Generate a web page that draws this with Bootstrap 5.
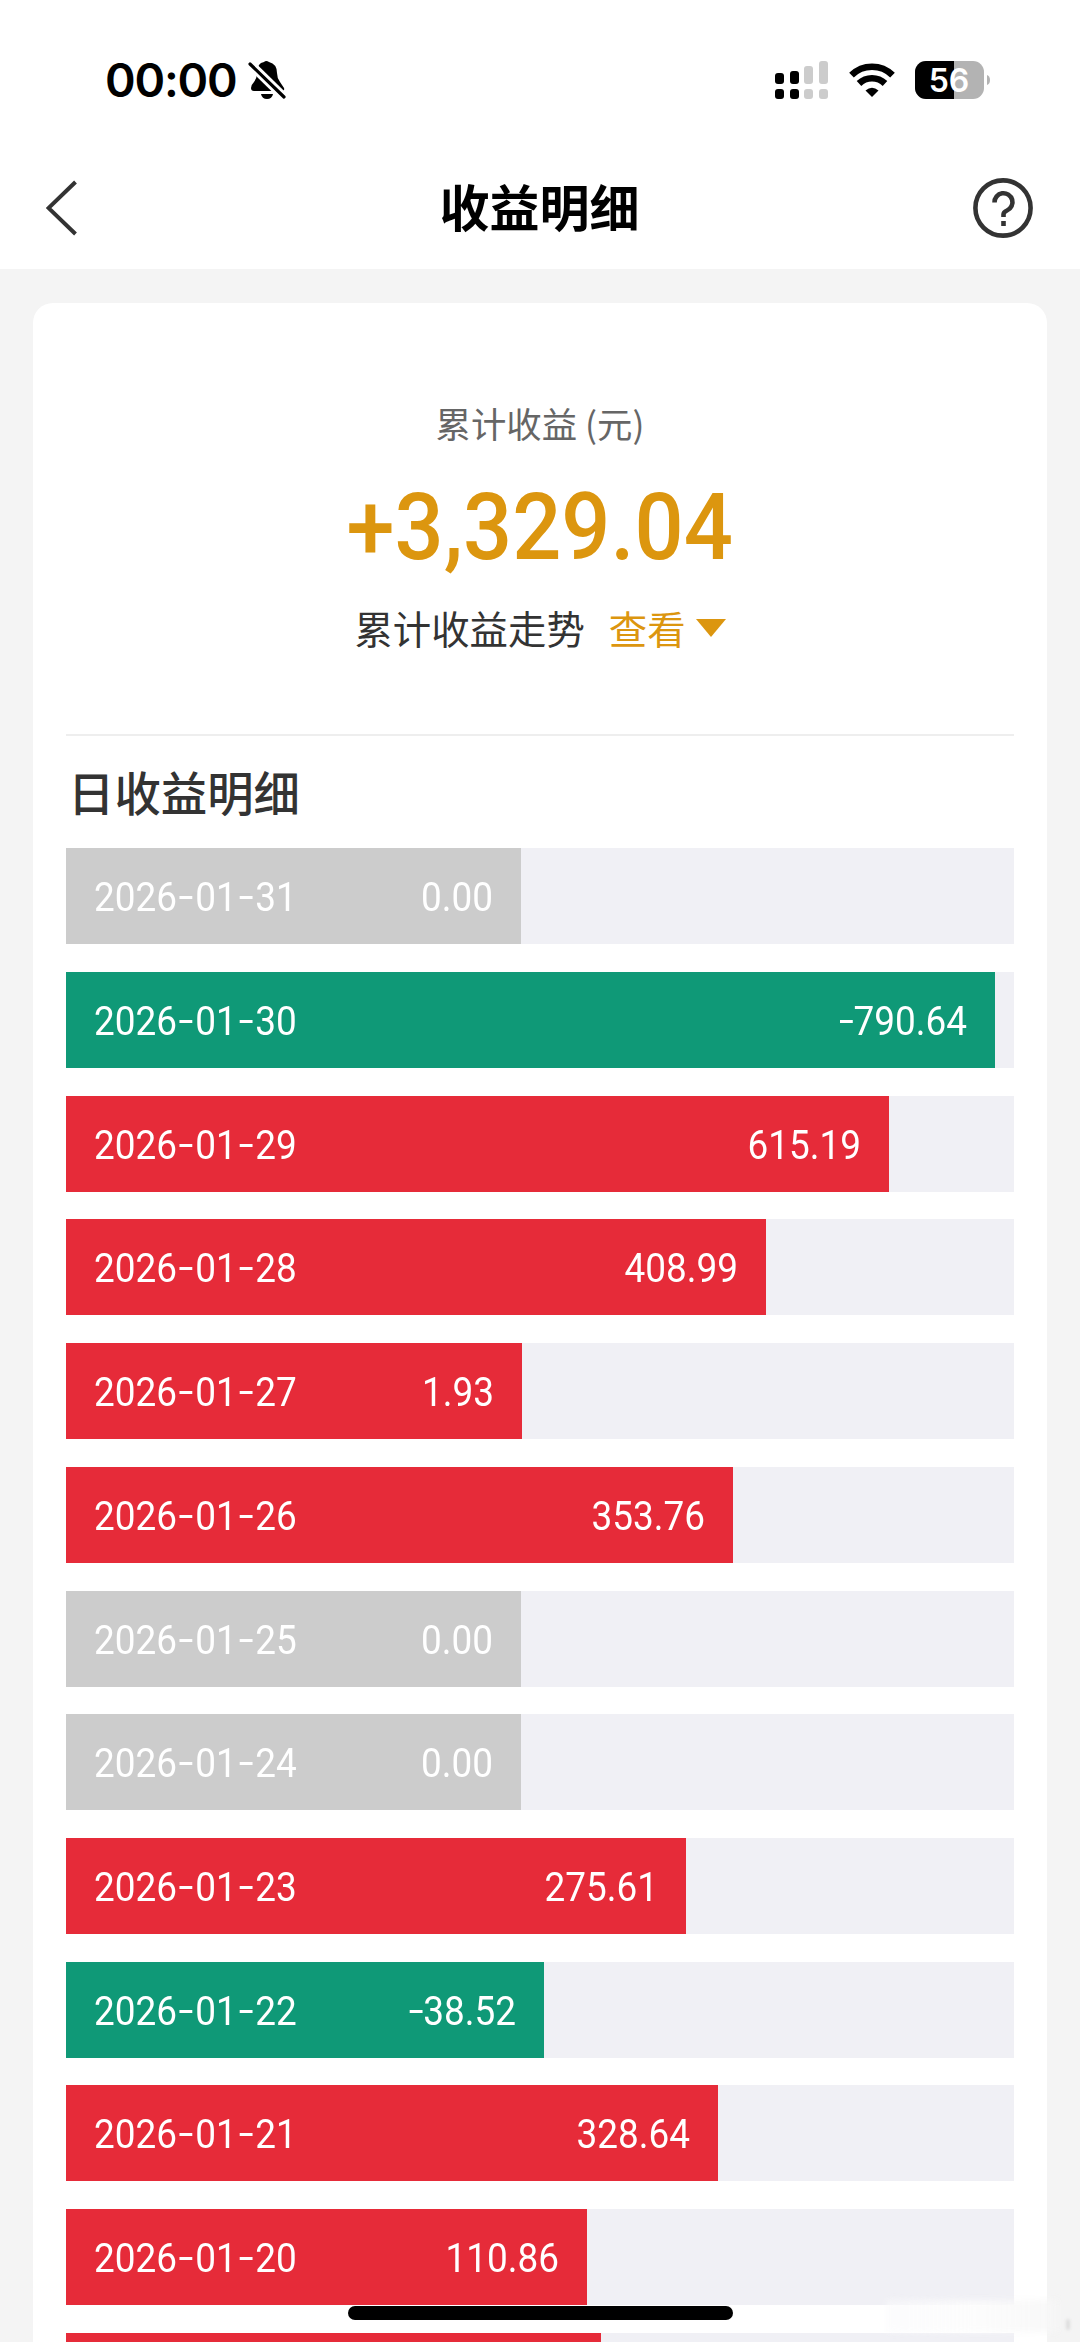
<!DOCTYPE html>
<html lang="zh-CN">
<head>
<meta charset="utf-8">
<meta name="viewport" content="width=device-width, initial-scale=1">
<title>收益明细</title>
<link href="https://cdn.jsdelivr.net/npm/bootstrap@5.3.0/dist/css/bootstrap.min.css" rel="stylesheet">
<style>
body{font-family:"Noto Sans CJK SC",sans-serif;background:#f4f4f4;color:#333}
.screen{width:1080px;height:2342px}
.statusbar{height:160px;padding:0 89px 0 105px}
.clock{font:600 46.500px/1 Inter,sans-serif;color:#000;letter-spacing:-1.2px}
.bell{margin-left:10px}
.titlebar{height:109px;padding:0 47px 14px 46px}
.titlebar h1{font-size:50px;font-weight:700;line-height:1;color:#000;padding-bottom:5px}
.sheet{margin:34px 33px 0;border-radius:20px;padding:0 33px;height:2100px}
.summary{height:433px;border-bottom:2px solid #eee}
.caption{font-size:35.4px;line-height:40px;color:#666;padding-top:100px}
.total{font:500 93px/80px Roboto,sans-serif;color:#dc960f;margin-top:45px}
.total span{display:inline-block;transform:scaleX(.93)}
.trend{font-size:38.4px;line-height:48px;margin-top:35px}
.trend svg{margin:2px 0 0 10px}
.gold{color:#dc960f}
.link-gap{margin-left:24px}
.daily-title{font-size:46.4px;font-weight:500;line-height:60px;padding:25px 0 0 2px;height:112.4px}
.daily{gap:27.7px}
.track{height:96px;background:#f0f0f5}
.fill{height:96px;padding:1px 28px 0;color:#fff;font:400 41px/96px Roboto,sans-serif}
.flat{background:#ccc}.up{background:#e62b39}.down{background:#0f9977}
.day{transform:scaleX(.9);transform-origin:left}
.fill i{display:inline-block;width:20.4px;text-align:center;font-style:normal;transform:translateY(-1px) scaleX(1.45)}
.amount i{width:16px}
.amount{transform:scaleX(.9);transform-origin:right}
.homebar{left:348px;top:2306px;width:385px;height:14px;border-radius:7px;background:#000}
.haze{left:886px;top:2300px;width:172px;height:32px;background:linear-gradient(90deg,rgba(250,250,252,.6),rgba(252,252,252,.85) 50%,rgba(246,246,246,.8));filter:blur(3px)}
.haze-edge{left:1066px;top:2319px;width:4px;height:11px;border-radius:2px;background:#ddd;filter:blur(1.5px)}
</style>
</head>
<body>
<div class="screen position-relative overflow-hidden">
<header class="bg-white">
 <div class="statusbar d-flex align-items-center justify-content-between">
  <div class="d-flex align-items-center">
   <span class="clock">00:00</span>
   <svg class="bell" width="40" height="42" viewBox="0 0 40 42"><path d="M4 29q0-3 3-6 3-4 3-9Q10 4 17 3q2-2 5 0 8 2 8 11 0 5 3 9l4 6q1 3-2 3H7q-3 0-3-3z"/><path d="M14 35h12q-1 5-6 5t-6-5z"/><path d="M1 3l37 36" stroke="#fff" stroke-width="9"/><path d="M3 5l34 33" stroke="#000" stroke-width="3.2" stroke-linecap="round"/></svg>
  </div>
  <div class="d-flex align-items-center">
   <svg width="54" height="40" viewBox="0 0 54 40"><g fill="#000"><rect x="0" y="13" width="9" height="11" rx="3"/><rect x="15" y="11" width="9" height="13" rx="3"/><rect x="0" y="29" width="9" height="10" rx="3"/><rect x="15" y="29" width="9" height="10" rx="3"/></g><g fill="#ccc"><rect x="29" y="6" width="9" height="18" rx="3"/><rect x="44" y="1" width="9" height="23" rx="3"/><rect x="29" y="29" width="9" height="10" rx="3"/><rect x="44" y="29" width="9" height="10" rx="3"/></g></svg>
   <svg style="margin-left:20px" width="46" height="36" viewBox="0 0 46 36"><g fill="none" stroke="#000" stroke-width="6.6"><path d="M2.5 13.2Q11 4.8 23 4.8t20.500 8.400"/><path d="M10 21.500Q15.500 16.200 23 16.200t13 5.300"/></g><path d="M16.500 28.500q6.500-5.500 13 0L23 35z"/></svg>
   <svg style="margin-left:20px" width="76" height="38" viewBox="0 0 76 38"><defs><clipPath id="cell"><rect width="69" height="38" rx="11"/></clipPath></defs><g clip-path="url(#cell)"><path fill="#b3b3b3" d="M0 0h69v38H0z"/><path d="M0 0h39v38H0z"/></g><path fill="#b3b3b3" d="M72 14q3 1 3 5t-3 5z"/><text x="34" y="30.500" text-anchor="middle" fill="#fff" font-family="Inter, sans-serif" font-weight="600" font-size="32">56</text></svg>
  </div>
 </div>
 <div class="titlebar d-flex align-items-center justify-content-between">
  <svg width="60" height="60" viewBox="0 0 60 60" fill="none" stroke="#333" stroke-width="4"><path d="M29.500 4L2.500 30l27 26"/></svg>
  <h1 class="m-0">收益明细</h1>
  <svg width="60" height="60" viewBox="0 0 60 60" fill="none" stroke="#333" stroke-width="4.600"><circle cx="30" cy="30" r="27.600"/><path d="M21.500 24.500a9 9 0 1 1 12.500 8q-3.500 1.500-3.500 4V39"/><path d="M30.500 43v5"/></svg>
 </div>
</header>
<main class="sheet bg-white">
 <section class="summary text-center">
  <div class="caption">累计收益 (元)</div>
  <div class="total"><span>+3,329.04</span></div>
  <div class="trend d-flex align-items-center justify-content-center"><span>累计收益走势</span><span class="gold link-gap">查看</span><svg width="30" height="18" viewBox="0 0 30 18"><path fill="#dc960f" d="M0 0h30L15 18z"/></svg></div>
 </section>
 <h2 class="daily-title m-0">日收益明细</h2>
 <section class="daily d-flex flex-column">
  <div class="track"><div class="fill flat d-flex justify-content-between" style="width:455px"><span class="day">2026<i>-</i>01<i>-</i>31</span><span class="amount">0.00</span></div></div>
  <div class="track"><div class="fill down d-flex justify-content-between" style="width:929px"><span class="day">2026<i>-</i>01<i>-</i>30</span><span class="amount"><i>-</i>790.64</span></div></div>
  <div class="track"><div class="fill up d-flex justify-content-between" style="width:823px"><span class="day">2026<i>-</i>01<i>-</i>29</span><span class="amount">615.19</span></div></div>
  <div class="track"><div class="fill up d-flex justify-content-between" style="width:700px"><span class="day">2026<i>-</i>01<i>-</i>28</span><span class="amount">408.99</span></div></div>
  <div class="track"><div class="fill up d-flex justify-content-between" style="width:456px"><span class="day">2026<i>-</i>01<i>-</i>27</span><span class="amount">1.93</span></div></div>
  <div class="track"><div class="fill up d-flex justify-content-between" style="width:667px"><span class="day">2026<i>-</i>01<i>-</i>26</span><span class="amount">353.76</span></div></div>
  <div class="track"><div class="fill flat d-flex justify-content-between" style="width:455px"><span class="day">2026<i>-</i>01<i>-</i>25</span><span class="amount">0.00</span></div></div>
  <div class="track"><div class="fill flat d-flex justify-content-between" style="width:455px"><span class="day">2026<i>-</i>01<i>-</i>24</span><span class="amount">0.00</span></div></div>
  <div class="track"><div class="fill up d-flex justify-content-between" style="width:620px"><span class="day">2026<i>-</i>01<i>-</i>23</span><span class="amount">275.61</span></div></div>
  <div class="track"><div class="fill down d-flex justify-content-between" style="width:478px"><span class="day">2026<i>-</i>01<i>-</i>22</span><span class="amount"><i>-</i>38.52</span></div></div>
  <div class="track"><div class="fill up d-flex justify-content-between" style="width:652px"><span class="day">2026<i>-</i>01<i>-</i>21</span><span class="amount">328.64</span></div></div>
  <div class="track"><div class="fill up d-flex justify-content-between" style="width:521px"><span class="day">2026<i>-</i>01<i>-</i>20</span><span class="amount">110.86</span></div></div>
  <div class="track"><div class="fill up" style="width:535px"></div></div>
 </section>
</main>
<div class="haze position-absolute"></div>
<div class="haze-edge position-absolute"></div>
<div class="homebar position-absolute"></div>
</div>
<script src="https://cdn.jsdelivr.net/npm/bootstrap@5.3.0/dist/js/bootstrap.bundle.min.js"></script>
</body>
</html>
